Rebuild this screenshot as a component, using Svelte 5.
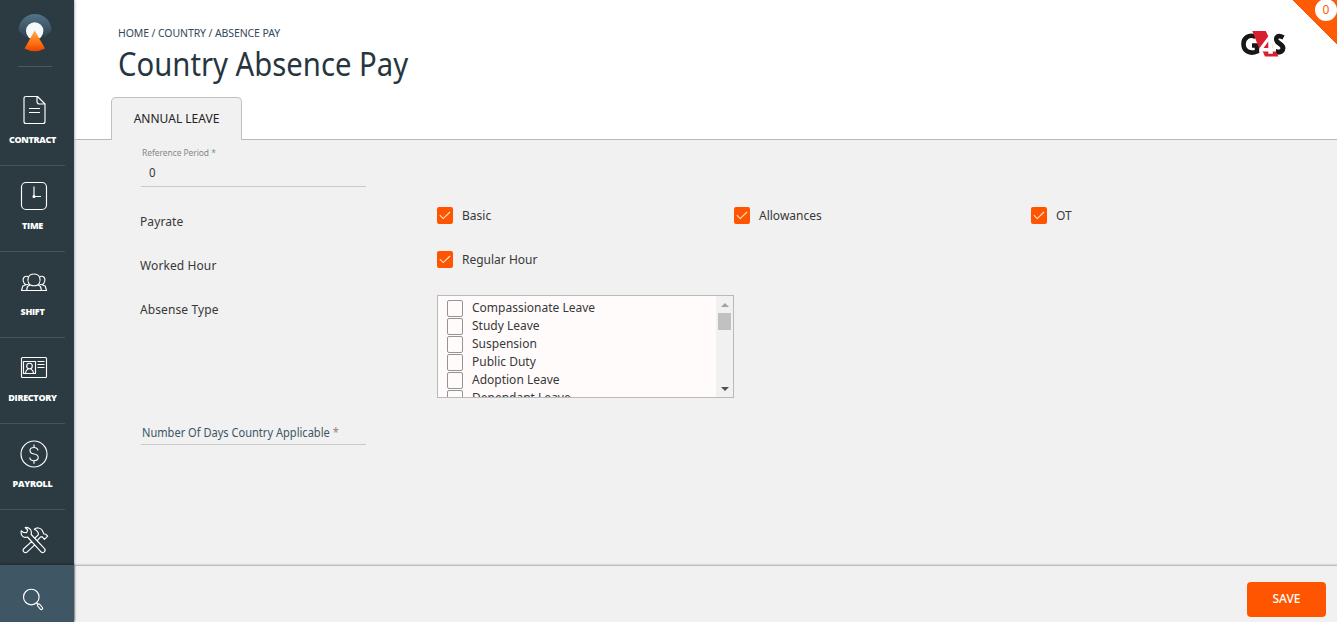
<script>
  const nav = ['CONTRACT', 'TIME', 'SHIFT', 'DIRECTORY', 'PAYROLL', ''];
  const leave = ['Compassionate Leave', 'Study Leave', 'Suspension', 'Public Duty', 'Adoption Leave', 'Dependant Leave'];
</script>

{#snippet check(label)}
  <label class="check">
    <span class="box on"><svg width="16" height="16" viewBox="0 0 16 16"><path d="M2.8 8.2 6.2 11.6 13 5" /></svg></span>
    <span>{label}</span>
  </label>
{/snippet}

{#snippet icon(name)}
  <svg class="icon" width="30" height="30" viewBox="0 0 30 30">
    {#if name === 'CONTRACT'}
      <path d="M7.500 1.500h11l7.500 7.500V26.500q0 2-2 2H7q-2 0-2-2V3.500q0-2 2-2zM18 1.500v5q0 2.500 2.500 2.500H26M10 13.500h11M10 17.500h11" />
    {:else if name === 'TIME'}
      <rect x="2.500" y="1.500" width="25" height="27" rx="4.500" />
      <path d="M15 5.500v10h7" /><circle cx="15" cy="15.500" r="1" fill="#fff" />
    {:else if name === 'SHIFT'}
      <path d="M9.800 16.500C8 13 8.500 7 15 7s7 6 5.200 9.500C18.500 19.500 11.500 19.500 9.800 16.500M10.800 18 8.500 19.500 7.500 23.500M19.200 18l2.300 1.500 1 4M9 9.500C5.500 8.500 3.500 11 4.200 14c.4 2 1.500 3.200 2.800 3.800L3.800 19l-1.300 4.500h25L26.200 19 23 17.800c1.300-.6 2.400-1.800 2.800-3.800.7-3-1.300-5.500-4.800-4.500M7 17.800l2.500-.5M23 17.800l-2.500-.5" />
    {:else if name === 'DIRECTORY'}
      <rect x="2.500" y="4.500" width="25" height="20" rx="1" />
      <rect x="4.500" y="8.500" width="12" height="12" />
      <circle cx="10.500" cy="13" r="2.800" />
      <path d="M6.500 20q.3-3 2.700-4M14.500 20q-.3-3-2.700-4M18.500 8.500h7M18.500 11.500h7M18.500 14.500h7" />
    {:else if name === 'PAYROLL'}
      <circle cx="15" cy="15" r="13" />
      <path d="M19 11.500q-.4-3-4-3-4 0-4 3t4 3.500 4.200 3.500-4.200 3.200q-4 0-4.200-3.200M15 5.500v3M15 21.700v3" />
    {:else}
      <path d="M4.500 7.500 2.200 5.800C1.700 9 3 11.500 5.300 12.200c1.400.4 2.400.1 3.200-.2L21.800 26.700q1.700 1.800 3.500.2 1.700-1.800 0-3.500L12.200 9.500c.7-3-.2-5-2.200-6.300-1.300-.8-2.700-1-3.800-.7L8.700 5 7.700 7.600zM12.800 16.300 5 23.500q-1.800 1.700-.2 3.300 1.700 1.700 3.500 0L16 19.700M16 13l3.300-3.200c.6-2.800-1.300-4.300-4-5.500C17.500 2.300 21.300 2.500 23 5l2 4 1.700.2 2 2-3.300 3.200-2.300-2.700-1.500.2-3.200 3.500" />
    {/if}
  </svg>
{/snippet}

<div class="app">
  <aside>
    <div class="brand">
      <svg width="34" height="40" viewBox="0 0 34 40">
        <defs>
          <linearGradient id="arc" x2="0" y2="1"><stop stop-color="#527487" /><stop offset="1" stop-color="#304451" /></linearGradient>
          <linearGradient id="cone" x2="0" y2="1"><stop stop-color="#ffab45" /><stop offset=".65" stop-color="#ff6c10" /><stop offset="1" stop-color="#e84400" /></linearGradient>
        </defs>
        <path fill="url(#arc)" d="M.5 17.500A16.500 16.500 0 0 1 33.500 17.500L27 24H7z" />
        <circle cx="16.700" cy="18" r="8.700" fill="#f6f9fc" />
        <path fill="url(#cone)" d="M16.700 17.500 27 35.500Q16.700 41 6.500 35.500z" />
      </svg>
    </div>
    <nav>
      {#each nav as name}
        <a class="item" href="#top">{@render icon(name)}{#if name}<span>{name}</span>{/if}</a>
      {/each}
    </nav>
    <div class="search">
      <svg width="22" height="23" viewBox="0 0 22 23"><circle cx="9.300" cy="9" r="7.800" /><path d="m14.500 15 1.500 1.300M15.700 16.500q1-1.200 2-.2l2.700 3.200q.7 1.200-.3 1.800t-1.800-.2L15.700 18q-.7-.8 0-1.500z" /></svg>
    </div>
  </aside>

  <main>
    <header>
      <div class="heading">
        <div class="crumbs">HOME / COUNTRY / ABSENCE PAY</div>
        <h1>Country Absence Pay</h1>
      </div>
      <svg class="company" width="46" height="28" viewBox="0 0 46 28">
        <path fill="none" stroke="#171717" stroke-width="4.600" d="M14.500 6.800C8 3.800 2.500 8 2.500 14c0 7 6.500 10.500 13.500 7.500V15.500h-5M42.500 7.500C37 4.500 34.500 7 35.500 10.500c1 3 6.500 4 6.500 7.500 0 4-4.500 4.800-8 3" />
        <path fill="#d71f30" d="M11.300 1h13.400L37.500 26.600H24L22 22l-4-4z" />
        <path fill="#fff" fill-rule="evenodd" d="M27.500 6h4.300v12H35v3.500h-3.200v2.300h-4.500v-2.300H18.500V18zM27.300 11.500 22.500 18h4.800z" />
        <path fill="#fff" d="M31.800 11 36 18h-4.200z" />
        <path fill="none" stroke="#171717" stroke-width="4.600" d="M36 11.500c1.500 2.500 6 3 6 6.500 0 3-2.500 4.500-5.500 4" />
      </svg>
      <div class="tab">ANNUAL LEAVE</div>
    </header>

    <section class="form">
      <div class="field period"><small>Reference Period *</small><span>0</span></div>
      <div class="row">
        <div class="name">Payrate</div>{@render check('Basic')}{@render check('Allowances')}{@render check('OT')}
      </div>
      <div class="row"><div class="name">Worked Hour</div>{@render check('Regular Hour')}</div>
      <div class="row tall">
        <div class="name">Absense Type</div>
        <div class="list">
          <div class="options">
            {#each leave as l}<label class="option"><span class="box"></span><span>{l}</span></label>{/each}
          </div>
          <div class="scroll"><i class="up"></i><i class="thumb"></i><i class="down"></i></div>
        </div>
      </div>
      <div class="field days"><span>Number Of Days Country Applicable <em>*</em></span></div>
    </section>

    <footer><button>SAVE</button></footer>
  </main>
  <div class="corner"><span>0</span></div>
</div>

<style>
  :global(body) { margin: 0; overflow: hidden; }
  * { box-sizing: border-box; }
  .app { display: flex; width: 1337px; height: 622px; overflow: hidden; position: relative; background: #f1f1f1; font: 12px/18px "Noto Sans", "Open Sans", sans-serif; color: #383838; }
  aside { width: 74px; flex: none; display: flex; flex-direction: column; background: #2c3a42; box-shadow: 1px 0 2px #bbb; z-index: 1; }
  .brand { height: 67px; flex: none; width: 34px; margin-left: 18px; padding-top: 13px; border-bottom: 1px solid #4a5861; }
  nav { flex: 1; min-height: 0; overflow: hidden; padding-top: 13px; }
  .item { display: flex; flex-direction: column; align-items: center; width: 65px; height: 86px; padding-top: 15px; border-bottom: 1px solid #46545c; color: #fff; text-decoration: none; }
  .item span { margin-top: 9px; font: 800 9px/12px "Open Sans", sans-serif; letter-spacing: -.3px; }
  .icon { flex: none; margin-left: 3px; }
  .icon, .search svg { fill: none; stroke: #fff; stroke-width: 1.150; stroke-linejoin: round; }
  .search { height: 57px; flex: none; padding: 23px 0 0 22px; background: #3f5665; box-shadow: 0 -1px 2px #1e292f; }
  main { flex: 1; display: flex; flex-direction: column; min-width: 0; }
  header { height: 140px; flex: none; background: #fff; border-bottom: 1px solid #b9b9b9; display: grid; grid-template: 97px 43px / 1fr 96px; }
  .heading { padding: 24px 0 0 44px; }
  .crumbs { font-size: 10.500px; line-height: 18px; letter-spacing: -.1px; color: #34495a; white-space: nowrap; }
  h1 { margin: 0; font-size: 33px; line-height: 44px; font-weight: 400; color: #263640; white-space: nowrap; transform: scaleX(.887); transform-origin: 0 0; }
  .company { margin-top: 30px; }
  .tab { width: 131px; height: 43px; margin-left: 37px; border: 1px solid #c0c0c0; border-bottom: 0; border-radius: 5px 5px 0 0; background: #f1f1f1; color: #222; text-align: center; line-height: 42px; font-size: 12px; }
  .form { flex: 1; min-height: 0; padding-left: 66px; }
  .field { width: 225px; margin-left: 1px; border-bottom: 1px solid #c9c9c9; }
  .period { height: 47px; padding: 5px 0 0 1px; display: flex; flex-direction: column; }
  small { font-size: 8.500px; letter-spacing: -.08px; line-height: 16px; color: #888; }
  .period span { margin-left: 7px; line-height: 22px; font-size: 13px; transform: scaleX(.88); transform-origin: 0 0; }
  .row { height: 44px; display: grid; grid-template-columns: 297px 297px 297px 1fr; padding-top: 10px; }
  .period + .row { margin-top: 6px; }
  .name { padding-top: 10px; letter-spacing: .1px; }
  .check { display: flex; height: 26px; padding-top: 4px; gap: 9px; }
  .box { width: 16px; height: 17px; flex: none; border: 1px solid #949494; border-radius: 2px; }
  .on { height: 17px; border: 0; background: #ff5500; }
  .on svg { display: block; fill: none; stroke: #ffe8dc; stroke-width: 1.100; }
  .tall { height: 118px; }
  .list { margin-top: 4px; width: 297px; height: 103px; border: 1px solid #b9b9b9; display: flex; background: #fffbfb; overflow: hidden; }
  .options { flex: 1; padding: 3px 0 0 9px; height: 101px; overflow: hidden; }
  .option { display: flex; height: 18px; gap: 9px; }
  .option .box { margin-top: 1px; }
  .scroll { width: 17px; background: #f1f1f1; display: flex; flex-direction: column; align-items: center; height: 102px; flex: none; }
  .up, .down { width: 0; border: 4px solid transparent; height: 0; }
  .up { border-bottom-color: #a3a3a3; border-top: 0; margin-top: 7px; }
  .thumb { width: 13px; height: 17px; background: #c1c1c1; margin-top: 6px; }
  .down { border-top-color: #505050; border-bottom: 0; margin-top: 57px; }
  .days { margin-top: 25px; height: 21px; padding-left: 1px; color: #405564; line-height: 18px; }
  .days span { display: inline-block; white-space: nowrap; transform: scaleX(.922); transform-origin: 0 0; }
  em { font-style: normal; color: #888; }
  footer { height: 57px; flex: none; display: flex; justify-content: flex-end; padding: 16px 11px 0 0; border-top: 1px solid #bcbcbc; box-shadow: 0 -1px 1px #ddd; }
  button { width: 79px; height: 35px; border: 0; border-radius: 4px; background: #ff5500; color: #fff; font: 500 12px/16px "Noto Sans", sans-serif; padding: 0 0 2px; }
  .corner { position: absolute; top: 0; right: 0; width: 44px; height: 44px; background: linear-gradient(45deg, transparent 50%, #ff5a05 50%); }
  .corner span { position: absolute; left: 22px; top: -1px; width: 22px; height: 22px; border-radius: 50%; background: #fff; color: #ff5a05; text-align: center; line-height: 22px; font-size: 12px; }
</style>
